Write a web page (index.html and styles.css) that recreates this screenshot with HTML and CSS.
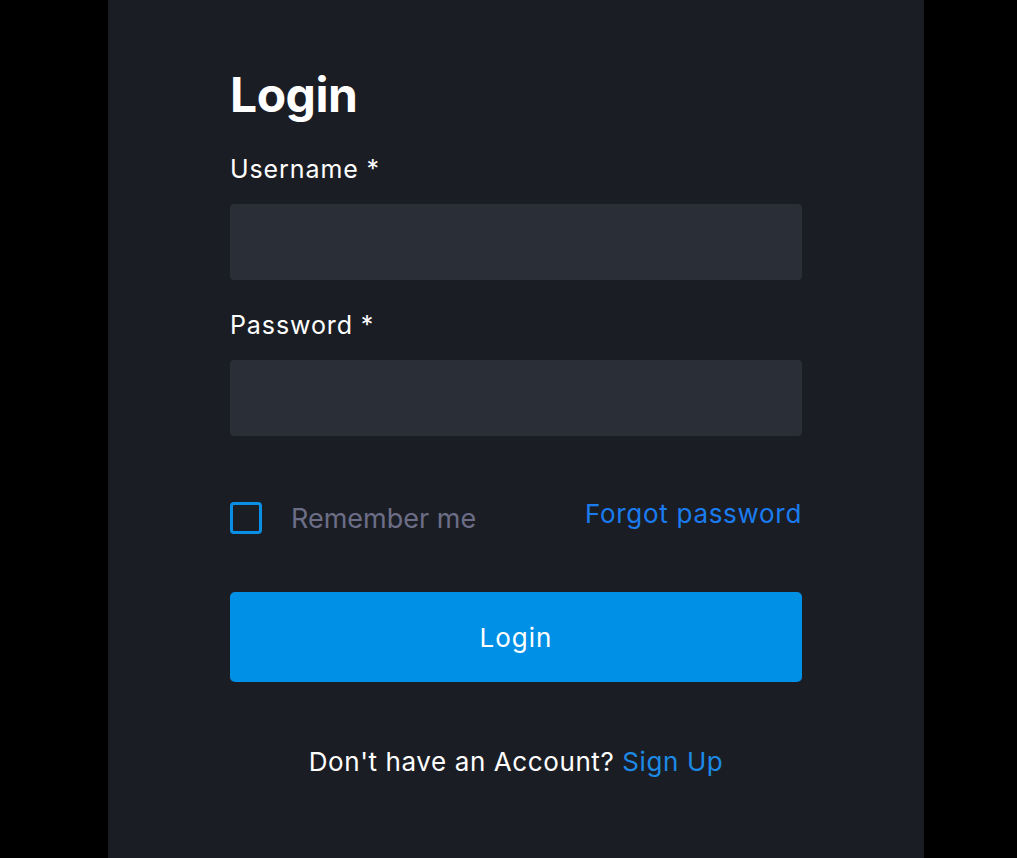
FILE: index.html
```html
<!DOCTYPE html>
<html lang="en">
<head>
<meta charset="utf-8">
<title>Login</title>
<link rel="stylesheet" href="styles.css">
</head>
<body>
<div class="page">
  <main class="card">
    <form class="form">
      <h1 class="title">Login</h1>
      <label class="label" for="username">Username *</label>
      <input class="input" id="username" type="text">
      <label class="label label-second" for="password">Password *</label>
      <input class="input" id="password" type="password">
      <div class="options">
        <label class="remember">
          <span class="checkbox"></span>
          <span class="remember-text">Remember me</span>
        </label>
        <a class="forgot" href="#">Forgot password</a>
      </div>
      <button class="submit" type="button">Login</button>
      <p class="signup">Don't have an Account? <a class="signup-link" href="#">Sign Up</a></p>
    </form>
  </main>
</div>
</body>
</html>
```
FILE: styles.css
```css
html, body {
  margin: 0;
  padding: 0;
  background: #000000;
  height: 100%;
}

body {
  font-family: Inter, "Noto Sans", "Liberation Sans", sans-serif;
  color: #ffffff;
}

.page {
  display: flex;
  padding-left: 108px;
  min-height: 100%;
}

.card {
  width: 816px;
  min-height: 858px;
  box-sizing: border-box;
  background: #1b1d24;
  padding: 0 122px;
}

.form {
  display: flex;
  flex-direction: column;
  padding-top: 71px;
}

.title {
  margin: 0;
  font-size: 48px;
  line-height: 48px;
  font-weight: 700;
  letter-spacing: -0.5px;
}

.label {
  display: block;
  margin-top: 38px;
  font-size: 25px;
  line-height: 24px;
  font-weight: 400;
  letter-spacing: 0.9px;
}

.label-second {
  margin-top: 33px;
}

.input {
  margin-top: 23px;
  height: 76px;
  box-sizing: border-box;
  border: none;
  border-radius: 4px;
  background: #2a2e37;
  color: #ffffff;
  font: inherit;
  font-size: 22px;
  padding: 0 16px;
  outline: none;
}

.options {
  margin-top: 66px;
  display: flex;
  justify-content: space-between;
  align-items: flex-start;
}

.remember {
  display: flex;
  align-items: center;
  gap: 29px;
}

.checkbox {
  width: 32px;
  height: 32px;
  box-sizing: border-box;
  border: 3px solid #0a8fe6;
  border-radius: 4px;
}

.remember-text {
  font-size: 27px;
  line-height: 32px;
  color: #6b6e86;
  position: relative;
  top: 1px;
}

.forgot {
  font-size: 26px;
  line-height: 24px;
  color: #1a7cf0;
  text-decoration: none;
  letter-spacing: 0.7px;
}

.submit {
  margin-top: 58px;
  height: 90px;
  border: none;
  border-radius: 5px;
  background: #0090e6;
  color: #ffffff;
  font: inherit;
  font-size: 26px;
  letter-spacing: 1px;
  cursor: pointer;
}

.signup {
  margin: 65px 0 0;
  text-align: center;
  font-size: 26px;
  line-height: 30px;
  letter-spacing: 0.6px;
}

.signup-link {
  color: #1c8ae4;
  text-decoration: none;
}
```
